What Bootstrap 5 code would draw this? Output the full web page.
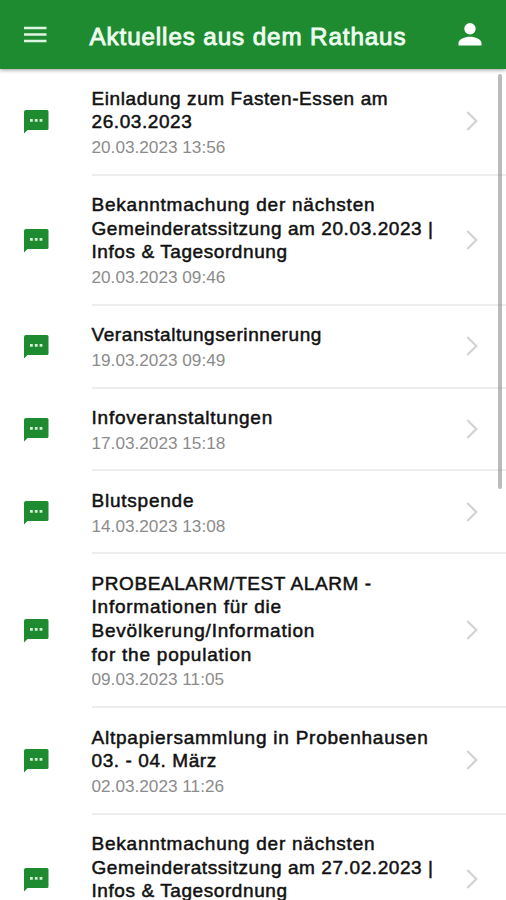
<!DOCTYPE html>
<html lang="de">
<head>
<meta charset="utf-8">
<meta name="viewport" content="width=device-width, initial-scale=1">
<title>Aktuelles aus dem Rathaus</title>
<link href="https://cdn.jsdelivr.net/npm/bootstrap@5.3.0/dist/css/bootstrap.min.css" rel="stylesheet">
<style>
  body { font-family: "Liberation Sans", Arial, sans-serif; height: 900px; }
  .app-bar { height: 69px; background: #1f8b30; box-shadow: 0 1px 4px rgba(0,0,0,.4); z-index: 2; padding: 0 24px; }
  .app-title { font-size: 24.2px; line-height: 30px; margin-left: 42.5px; padding-top: 4px; color: #eefbef; -webkit-text-stroke: .9px #eefbef; letter-spacing: .9px; }
  .news-icon { width: 91.5px; padding-left: 24px; }
  .news-body { border-bottom: 2px solid #ededed; padding: 17.5px 0 12.6px; }
  .news-body.is-last { padding-bottom: 39.6px; }
  .news-title { font-size: 19px; line-height: 23.7px; color: #111; -webkit-text-stroke: .5px #111; letter-spacing: .58px; }
  .news-title.is-wide, .is-wide { letter-spacing: .77px; }
  .news-date { font-size: 17.2px; line-height: 27px; color: #8b8b8b; }
  .news-arrow { width: 40px; padding-bottom: 4.5px; }
  .news-arrow.is-last { margin-bottom: -27px; }
  .scroll-thumb { top: 74px; right: 4px; width: 4px; height: 415px; background: rgba(120,120,120,.5); border-radius: 2px; }
</style>
</head>
<body class="bg-white overflow-hidden position-relative">
<svg class="d-none">
  <symbol id="comment" viewBox="0 0 25 24"><path fill="#1f8b30" d="M2 0h21a1.500 1.500 0 0 1 1.500 1.500v17a1.500 1.500 0 0 1-1.500 1.500H3.500L0 23.500V2a2 2 0 0 1 2-2z"/><path fill="#d5f0d6" d="M6 9h2.800v2.800H6zM10.800 9h2.800v2.800h-2.800zM15.600 9h2.800v2.800h-2.800z"/></symbol>
  <symbol id="chevron" viewBox="0 0 12 20"><path fill="none" stroke="#d3d3d3" stroke-width="2.300" d="M1.300 1l9 9-9 9"/></symbol>
</svg>

<header class="app-bar d-flex align-items-center position-relative">
  <svg width="23" height="17" viewBox="0 0 23 17"><path stroke="#dff5e1" stroke-width="2.600" d="M0 2h22.500M0 8.500h22.500M0 15h22.500"/></svg>
  <h1 class="app-title mb-0 fw-normal text-nowrap">Aktuelles aus dem Rathaus</h1>
  <svg class="ms-auto" width="24" height="23" viewBox="0 0 24 23"><path fill="#fff" d="M12 0a5.700 5.700 0 1 1 0 11.400A5.700 5.700 0 0 1 12 0zM.500 22.500V20c0-4 6.500-6.300 11.500-6.300S23.500 16 23.500 20v2.500z"/></svg>
</header>

<main class="news-list">
  <article class="d-flex">
    <div class="news-icon d-flex align-items-center flex-shrink-0"><svg width="25" height="24"><use href="#comment"/></svg></div>
    <div class="news-body d-flex flex-grow-1 align-items-center">
      <div class="flex-grow-1"><div class="news-title">Einladung zum Fasten-Essen am<br>26.03.2023</div><div class="news-date">20.03.2023 13:56</div></div>
      <div class="news-arrow d-flex"><svg width="12" height="20"><use href="#chevron"/></svg></div>
    </div>
  </article>
  <article class="d-flex">
    <div class="news-icon d-flex align-items-center flex-shrink-0"><svg width="25" height="24"><use href="#comment"/></svg></div>
    <div class="news-body d-flex flex-grow-1 align-items-center">
      <div class="flex-grow-1"><div class="news-title"><span class="is-wide">Bekanntmachung der nächsten</span><br>Gemeinderatssitzung am 20.03.2023 |<br>Infos &amp; Tagesordnung</div><div class="news-date">20.03.2023 09:46</div></div>
      <div class="news-arrow d-flex"><svg width="12" height="20"><use href="#chevron"/></svg></div>
    </div>
  </article>
  <article class="d-flex">
    <div class="news-icon d-flex align-items-center flex-shrink-0"><svg width="25" height="24"><use href="#comment"/></svg></div>
    <div class="news-body d-flex flex-grow-1 align-items-center">
      <div class="flex-grow-1"><div class="news-title">Veranstaltungserinnerung</div><div class="news-date">19.03.2023 09:49</div></div>
      <div class="news-arrow d-flex"><svg width="12" height="20"><use href="#chevron"/></svg></div>
    </div>
  </article>
  <article class="d-flex">
    <div class="news-icon d-flex align-items-center flex-shrink-0"><svg width="25" height="24"><use href="#comment"/></svg></div>
    <div class="news-body d-flex flex-grow-1 align-items-center">
      <div class="flex-grow-1"><div class="news-title is-wide">Infoveranstaltungen</div><div class="news-date">17.03.2023 15:18</div></div>
      <div class="news-arrow d-flex"><svg width="12" height="20"><use href="#chevron"/></svg></div>
    </div>
  </article>
  <article class="d-flex">
    <div class="news-icon d-flex align-items-center flex-shrink-0"><svg width="25" height="24"><use href="#comment"/></svg></div>
    <div class="news-body d-flex flex-grow-1 align-items-center">
      <div class="flex-grow-1"><div class="news-title is-wide">Blutspende</div><div class="news-date">14.03.2023 13:08</div></div>
      <div class="news-arrow d-flex"><svg width="12" height="20"><use href="#chevron"/></svg></div>
    </div>
  </article>
  <article class="d-flex">
    <div class="news-icon d-flex align-items-center flex-shrink-0"><svg width="25" height="24"><use href="#comment"/></svg></div>
    <div class="news-body d-flex flex-grow-1 align-items-center">
      <div class="flex-grow-1"><div class="news-title">PROBEALARM/TEST ALARM -<br><span class="is-wide">Informationen für die<br>Bevölkerung/Information<br>for the population</span></div><div class="news-date">09.03.2023 11:05</div></div>
      <div class="news-arrow d-flex"><svg width="12" height="20"><use href="#chevron"/></svg></div>
    </div>
  </article>
  <article class="d-flex">
    <div class="news-icon d-flex align-items-center flex-shrink-0"><svg width="25" height="24"><use href="#comment"/></svg></div>
    <div class="news-body d-flex flex-grow-1 align-items-center">
      <div class="flex-grow-1"><div class="news-title"><span class="is-wide">Altpapiersammlung in Probenhausen</span><br>03. - 04. März</div><div class="news-date">02.03.2023 11:26</div></div>
      <div class="news-arrow d-flex"><svg width="12" height="20"><use href="#chevron"/></svg></div>
    </div>
  </article>
  <article class="d-flex">
    <div class="news-icon d-flex align-items-center flex-shrink-0"><svg width="25" height="24"><use href="#comment"/></svg></div>
    <div class="news-body is-last d-flex flex-grow-1 align-items-center">
      <div class="flex-grow-1"><div class="news-title"><span class="is-wide">Bekanntmachung der nächsten</span><br>Gemeinderatssitzung am 27.02.2023 |<br>Infos &amp; Tagesordnung</div></div>
      <div class="news-arrow is-last d-flex"><svg width="12" height="20"><use href="#chevron"/></svg></div>
    </div>
  </article>
</main>
<div class="scroll-thumb position-absolute"></div>
<script src="https://cdn.jsdelivr.net/npm/bootstrap@5.3.0/dist/js/bootstrap.bundle.min.js"></script>
</body>
</html>
